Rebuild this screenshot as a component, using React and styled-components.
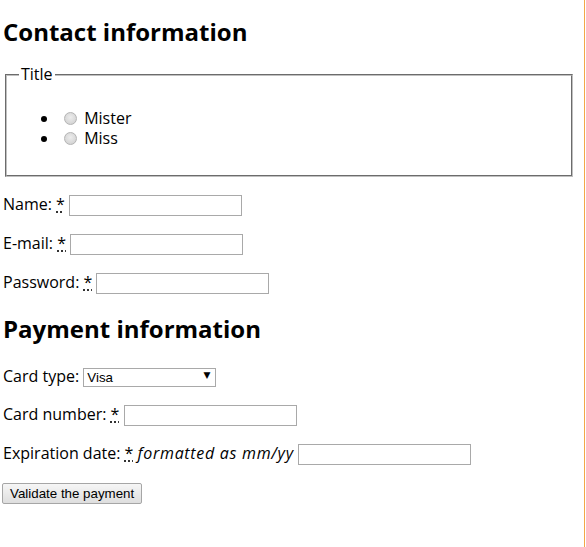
import React from "react";
import styled, { createGlobalStyle } from "styled-components";

const Global = createGlobalStyle`
  html, body { margin: 0; padding: 0; background: #fff; }
  body { font-family: "Open Sans", "Noto Sans", sans-serif; font-size: 16px; color: #000; }
`;

const Frame = styled.div`
  width: 585px;
  min-height: 547px;
  box-sizing: border-box;
  border-right: 1px solid #f2a748;
`;

const Form = styled.form`
  display: flow-root;
  padding: 0 9px 0 3px;
  line-height: 21px;
`;

const Heading = styled.h2`
  font-size: 24px;
  font-weight: 700;
  line-height: 32px;
  margin: ${(p) => p.$top}px 0 ${(p) => p.$bottom}px;
`;

const Fieldset = styled.fieldset`
  margin: 0 2px;
  padding: 7px 12px 11px;
  border: 2px groove #c0c0c0;
`;

const Legend = styled.legend`
  padding: 0 2px;
  line-height: 21px;
`;

const List = styled.ul`
  margin: 16px 0;
  padding-left: 40px;
  list-style: disc;
`;

const Item = styled.li`
  line-height: 20px;
`;

const Radio = styled.input.attrs({ type: "radio" })`
  appearance: none;
  box-sizing: border-box;
  width: 13px;
  height: 13px;
  margin: 3px 3px 0 5px;
  vertical-align: -1px;
  border-radius: 50%;
  border: 1px solid #b4b4b4;
  background: radial-gradient(circle at 50% 40%, #ececec 0%, #d6d6d6 70%, #cbcbcb 100%);
  &:checked {
    background: radial-gradient(circle, #333 0 30%, #e2e2e2 36%);
  }
`;

const Row = styled.p`
  margin: 16px 0;
  line-height: 22px;
`;

const Req = styled.abbr`
  text-decoration: underline dotted;
  text-underline-offset: 2px;
  cursor: help;
`;

const Hint = styled.em`
  font-style: italic;
  letter-spacing: 0.7px;
`;

const TextInput = styled.input`
  box-sizing: border-box;
  width: 173px;
  height: 21px;
  border: 1px solid #a9a9a9;
  padding: 1px 2px;
  font: 13.33px "Liberation Sans", Arial, sans-serif;
  margin: 0;
`;

const SelectWrap = styled.span`
  position: relative;
  display: inline-block;
  &::after {
    content: "▼";
    position: absolute;
    right: 6px;
    top: 50%;
    transform: translateY(-52%);
    font: 9px "DejaVu Sans", sans-serif;
    line-height: 1;
    color: #000;
    pointer-events: none;
  }
`;

const SelectBox = styled.select`
  appearance: none;
  box-sizing: border-box;
  width: 133px;
  height: 19px;
  border: 1px solid #a9a9a9;
  border-radius: 0;
  padding: 0 3px;
  font: 13.33px "Liberation Sans", Arial, sans-serif;
  background: #fff;
  color: #000;
  margin: 0;
`;

const Button = styled.button`
  box-sizing: border-box;
  height: 21px;
  padding: 0 7px;
  margin: 0 0 0 -1px;
  border: 1px solid #a6a6a6;
  border-radius: 2px;
  background: linear-gradient(#f6f6f6, #dedede);
  font: 13.33px "Liberation Sans", Arial, sans-serif;
  color: #000;
`;

function Field({ label, hint, children }) {
  return (
    <Row>
      <label>
        {label}: <Req title="required">*</Req>
        {hint ? <> <Hint>{hint}</Hint></> : null}
      </label>{" "}
      {children}
    </Row>
  );
}

export default function App() {
  return (
    <Frame>
      <Global />
      <Form onSubmit={(e) => e.preventDefault()}>
        <Heading $top={16} $bottom={16}>Contact information</Heading>
        <Fieldset>
          <Legend>Title</Legend>
          <List>
            <Item>
              <Radio name="title" id="title_1" value="M." /> <label htmlFor="title_1">Mister</label>
            </Item>
            <Item>
              <Radio name="title" id="title_2" value="Ms." /> <label htmlFor="title_2">Miss</label>
            </Item>
          </List>
        </Fieldset>
        <Field label="Name">
          <TextInput type="text" name="username" />
        </Field>
        <Field label="E-mail">
          <TextInput type="email" name="usermail" />
        </Field>
        <Field label="Password">
          <TextInput type="password" name="pwd" />
        </Field>
        <Heading $top={19} $bottom={20}>Payment information</Heading>
        <Row>
          <label htmlFor="card">Card type:</label>{" "}
          <SelectWrap>
            <SelectBox id="card" name="usercard" defaultValue="visa">
              <option value="visa">Visa</option>
              <option value="mc">Mastercard</option>
              <option value="amex">American Express</option>
            </SelectBox>
          </SelectWrap>
        </Row>
        <Field label="Card number">
          <TextInput type="tel" name="cardnumber" />
        </Field>
        <Field label="Expiration date" hint="formatted as mm/yy">
          <TextInput type="text" name="expiration" />
        </Field>
        <Row>
          <Button type="submit">Validate the payment</Button>
        </Row>
      </Form>
    </Frame>
  );
}
